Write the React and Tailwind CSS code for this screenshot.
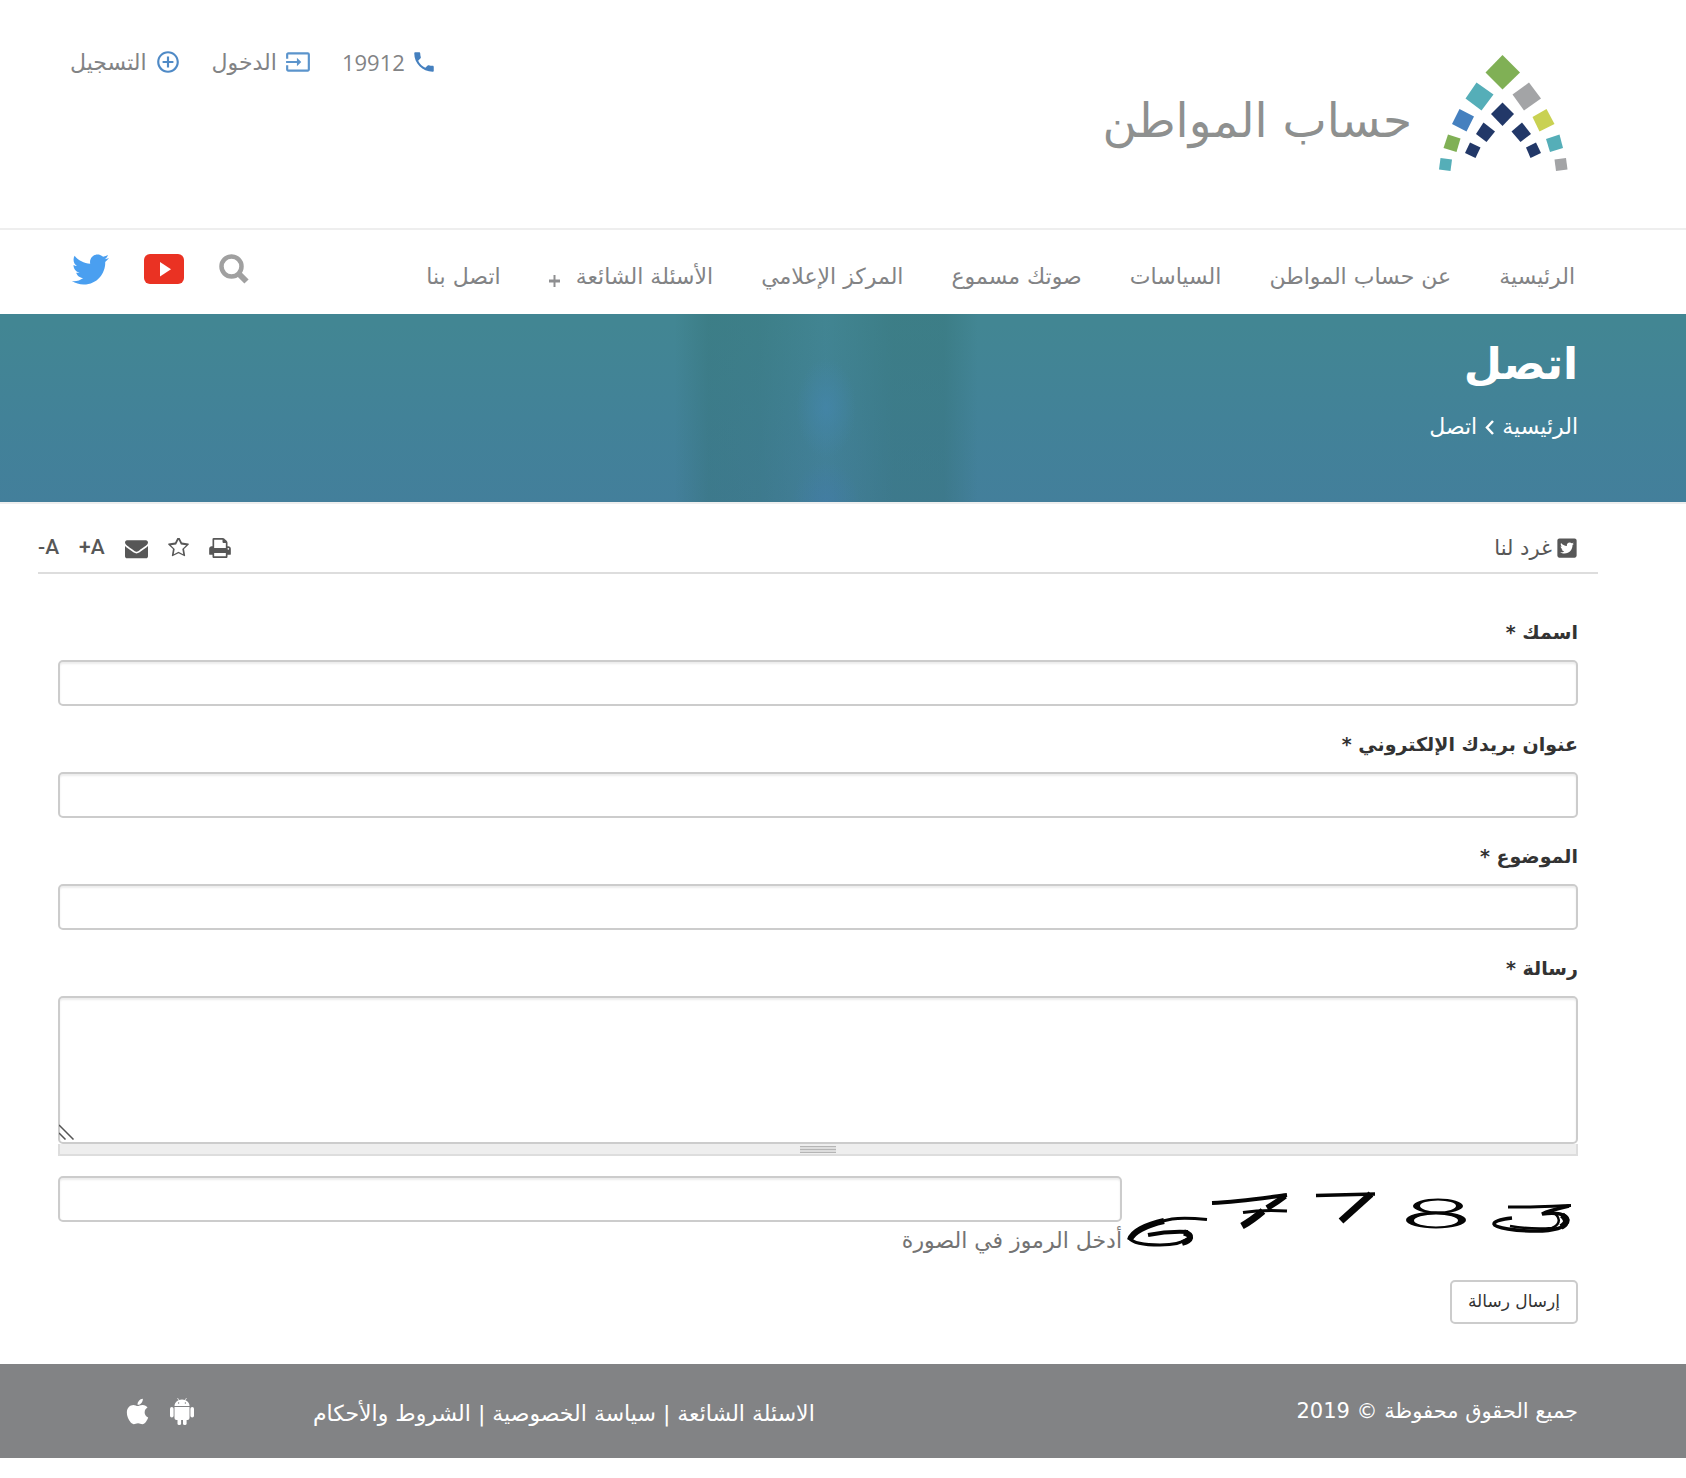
import React from "react";
import { FaApple, FaTwitter, FaTwitterSquare } from "react-icons/fa";
import { MdAddCircleOutline, MdInput, MdPhone } from "react-icons/md";

const squares = [
  ["#80b055", "63.5,0 81,17.5 63.5,34.5 46.5,17.5"],
  ["#55aeb8", "37.5,27.5 54.5,39.5 42.5,55.5 26.5,43.5"],
  ["#a3a4a6", "90,27.5 102,43.5 85,55.5 73.5,39.5"],
  ["#4580bf", "20.5,54 35,61.5 27.5,76.5 13,69"],
  ["#c9d152", "107.5,54 115.5,69 100.5,76.5 93.5,62"],
  ["#80b055", "9,79.5 21.5,83.5 17.5,97 4.5,93"],
  ["#55aeb8", "120.5,79.5 124,93 111,97 107,84"],
  ["#55aeb8", "1.5,103 13,104.5 11.5,116 0,114.5"],
  ["#a3a4a6", "127,103 128.5,114.5 117,116 115.5,104.5"],
  ["#223868", "63.5,47.5 75,59 63.5,71 52,59"],
  ["#223868", "44.5,67.5 56,76.5 47.5,87 37,79"],
  ["#223868", "83,67.5 92,79 81.5,87 72.5,76.5"],
  ["#223868", "31,87.5 41.5,92.5 36.5,103 26,98"],
  ["#223868", "97,87.5 102,98 91.5,103 87,92.5"],
];

function LogoMark() {
  return (
    <svg viewBox="0 0 129 116" className="h-[116px] w-[129px] shrink-0" aria-hidden="true">
      {squares.map(([fill, points]) => (
        <polygon key={points} fill={fill} points={points} />
      ))}
    </svg>
  );
}

function SearchIcon() {
  return (
    <svg viewBox="0 0 30 30" className="size-[30px]" fill="none" stroke="#a0a0a0" aria-hidden="true">
      <circle cx="12.5" cy="12.5" r="10" strokeWidth="4.500" />
      <path d="M19.5 19.5l8 8" strokeWidth="6" />
    </svg>
  );
}

function YoutubeIcon() {
  return (
    <svg viewBox="0 0 40 30" className="h-[30px] w-10" aria-hidden="true">
      <rect width="40" height="30" rx="6" fill="#ea3223" />
      <path d="M16 8v14.500l11-7.250z" fill="#fff" />
    </svg>
  );
}

function PrintIcon() {
  return (
    <svg viewBox="0 0 1664 1536" className="h-5 w-[22px]" fill="currentColor" aria-hidden="true">
      <path d="M384 1408h896v-256h-896v256zM384 768h896v-384h-160q-40 0-68-28t-28-68v-160h-640v640zM1536 832q0-26-19-45t-45-19-45 19-19 45 19 45 45 19 45-19 19-45zM1664 832v416q0 13-9.5 22.5t-22.5 9.5h-224v160q0 40-28 68t-68 28h-960q-40 0-68-28t-28-68v-160h-224q-13 0-22.5-9.5t-9.5-22.5v-416q0-79 56.5-135.5t135.5-56.5h64v-544q0-40 28-68t68-28h672q40 0 88 20t76 48l152 152q28 28 48 76t20 88v256h64q79 0 135.5 56.5t56.5 135.5z" />
    </svg>
  );
}

function StarIcon() {
  return (
    <svg viewBox="0 128 1664 1600" className="h-5 w-[21px]" fill="currentColor" aria-hidden="true">
      <path d="M1137 1004l306-297-422-62-189-382-189 382-422 62 306 297-73 421 378-199 377 199zM1664 615q0 22-26 48l-363 354 86 500q1 7 1 20 0 50-41 50-19 0-40-12l-449-236-449 236q-22 12-40 12-21 0-31.500-14.500t-10.500-35.500q0-6 2-20l86-500-364-354q-25-27-25-48 0-37 56-46l502-73 225-455q19-41 49-41t49 41l225 455 502 73q56 9 56 46z" />
    </svg>
  );
}

function EnvelopeIcon() {
  return (
    <svg viewBox="0 0 1792 1792" className="size-[23px]" fill="currentColor" aria-hidden="true">
      <path d="M1792 710v794q0 66-47 113t-113 47h-1472q-66 0-113-47t-47-113v-794q44 49 101 87 362 246 497 345 57 42 92.500 65.500t94.500 48 110 24.500h2q51 0 110-24.500t94.500-48 92.500-65.500q170-123 498-345 57-39 100-87zM1792 416q0 79-49 151t-122 123q-376 261-468 325-10 7-42.500 31t-54 38.500-52 32.500-57.500 27-50 9h-2q-23 0-50-9t-57.500-27-52-32.500-54-38.500-42.500-31q-91-64-262-182.500t-205-142.500q-62-42-117-115.500t-55-136.500q0-78 41.500-130t118.500-52h1472q65 0 112.500 47t47.500 113z" />
    </svg>
  );
}

function AndroidIcon() {
  return (
    <svg viewBox="0 0 24 27" className="h-[27px] w-6" fill="#fff" aria-hidden="true">
      <path d="M4.500 8C4.500 4.500 7.500 1.500 12 1.500S19.500 4.500 19.500 8z" />
      <path d="M7.500 0l1.500 2.500M16.500 0L15 2.500" stroke="#fff" strokeWidth="0.700" />
      <path d="M4.500 9h15v11a2 2 0 0 1-2 2h-11a2 2 0 0 1-2-2z" />
      <rect x="0" y="9" width="3.600" height="10.500" rx="1.800" />
      <rect x="20.400" y="9" width="3.600" height="10.500" rx="1.800" />
      <rect x="7.500" y="18" width="3.600" height="9" rx="1.600" />
      <rect x="13" y="18" width="3.600" height="9" rx="1.600" />
      <circle cx="8.600" cy="5" r="0.700" fill="#828385" />
      <circle cx="15.400" cy="5" r="0.700" fill="#828385" />
    </svg>
  );
}

function CaptchaImage() {
  return (
    <svg
      viewBox="0 0 456 72"
      className="mt-1 h-[72px] w-[456px] shrink-0"
      fill="none"
      stroke="#050505"
      strokeWidth="2.500"
      role="img"
      aria-label="CAPTCHA"
    >
      <path d="M85 39.500C70 38 60 37.500 50 39C34 42 24 46 18 50" strokeWidth="3" />
      <path d="M42 41C24 45 10 52 8 60" strokeWidth="6" />
      <path d="M7 58C10 62 20 65 38 65C52 65 62 62 67 58" strokeWidth="3" />
      <path d="M60 63C70 60 71 55 62 52.500" strokeWidth="6" />
      <path d="M66 52C48 51 36 53 26 55" strokeWidth="4" />
      <path d="M90 23C118 22 142 18 165 15" strokeWidth="4" />
      <path d="M163 16C158 20 152 24 145 28" strokeWidth="6" />
      <path d="M121 32.500C134 30.500 148 30 165 31" strokeWidth="3" />
      <path d="M141 31C134 37 129 41 120 46" strokeWidth="7" />
      <path d="M194 15.500L253 14" strokeWidth="3.500" />
      <path d="M249 14C240 22 230 31 219 41" strokeWidth="7" />
      <g fill="#050505" stroke="none" fillRule="evenodd">
        <path d="M291 26a25 7.500 0 1 0 50 0a25 7.500 0 1 0-50 0zM298 26a18 5.500 0 1 0 36 0a18 5.500 0 1 0-36 0z" />
        <path d="M284 40a30 8.500 0 1 0 60 0a30 8.500 0 1 0-60 0zM292 40.500a22 6 0 1 0 44 0a22 6 0 1 0-44 0z" />
      </g>
      <path d="M386 27C408 27.500 430 26 449 25.500" strokeWidth="3" />
      <path d="M447 26C434 29 426 31 420 34C434 32 445 34 446 40C446 48 430 51 414 51C394 51 373 48 372 44C372 41 380 39 390 38" strokeWidth="3.500" />
      <path d="M430 32C438 36 440 44 430 48C418 49 400 48 388 46" strokeWidth="2.500" />
      <path d="M440 35C445 39 446 43 439 47" strokeWidth="6" />
    </svg>
  );
}

const navItems = [
  "الرئيسية",
  "عن حساب المواطن",
  "السياسات",
  "صوتك مسموع",
  "المركز الإعلامي",
  "الأسئلة الشائعة",
  "اتصل بنا",
];

const fieldBox =
  "block w-full rounded-[5px] border-2 border-[#ccc] bg-white px-3 text-[20px] text-[#555] shadow-[inset_0_2px_2px_rgba(0,0,0,0.075)] outline-none";

const labelText = "mb-4 block text-[19px] leading-6 font-bold text-[#333]";

function Field({ id, label, type }) {
  return (
    <div className="mb-[26px]">
      <label htmlFor={id} className={labelText}>
        {label} *
      </label>
      <input id={id} type={type} required className={`${fieldBox} h-[46px]`} />
    </div>
  );
}

export default function App() {
  return (
    <div dir="rtl" className="min-h-screen bg-white font-['DejaVu_Sans',sans-serif] text-[22px] text-[#828385]">
      <header>
        <div className="flex h-[228px] items-start justify-between pr-[118px] pl-[70px]">
          <a href="#home" className="mt-[55px] flex items-center gap-[27px] text-[#8e908f]">
            <LogoMark />
            <span className="pt-4 text-[47px] leading-[60px] whitespace-nowrap">حساب المواطن</span>
          </a>
          <div className="mt-[47px] flex h-[30px] items-center gap-[31px] whitespace-nowrap">
            <a href="tel:19912" className="flex items-center gap-1.5 font-['Open_Sans','DejaVu_Sans',sans-serif]">
              <MdPhone className="size-[26px] text-[#4580bf]" aria-hidden="true" />
              19912
            </a>
            <a href="#login" className="flex items-center gap-2">
              <MdInput className="size-[26px] text-[#5b94cc]" aria-hidden="true" />
              الدخول
            </a>
            <a href="#register" className="flex items-center gap-2">
              <MdAddCircleOutline className="size-[26px] text-[#4f8ac6]" aria-hidden="true" />
              التسجيل
            </a>
          </div>
        </div>

        <div className="flex h-[86px] items-center justify-between border-t-2 border-[#eee] pr-[111px] pl-[72px]">
          <nav className="mt-2 flex items-center gap-12 whitespace-nowrap">
            {navItems.map((item) => (
              <a key={item} href="#nav" className="flex items-center gap-4">
                {item}
                {item === "الأسئلة الشائعة" && (
                  <svg viewBox="0 0 11 12" className="mt-2.5 h-3 w-[11px]" stroke="#8e8f91" fill="none" aria-hidden="true">
                    <path d="M0 6h11" strokeWidth="3" />
                    <path d="M5.500 0v12" strokeWidth="2" />
                  </svg>
                )}
              </a>
            ))}
          </nav>
          <div className="mb-1.5 flex items-center gap-[35px]">
            <button type="button" aria-label="بحث">
              <SearchIcon />
            </button>
            <a href="#youtube" aria-label="YouTube">
              <YoutubeIcon />
            </a>
            <a href="#twitter" aria-label="Twitter">
              <FaTwitter className="size-[37px] text-[#4a9ff0]" aria-hidden="true" />
            </a>
          </div>
        </div>
      </header>

      <section className="h-[190px] border-b-2 border-[#eee] bg-[radial-gradient(ellipse_30px_50px_at_49%_50%,rgba(68,134,172,0.7),transparent),radial-gradient(ellipse_34px_40px_at_49%_100%,rgba(66,124,168,0.6),transparent),linear-gradient(90deg,transparent_40%,rgba(50,110,112,0.35)_42%,rgba(50,110,112,0.3)_45%,rgba(60,120,135,0.1)_49%,rgba(50,110,112,0.35)_53%,rgba(50,110,112,0.35)_56%,transparent_58%),linear-gradient(180deg,#428693_5%,#428298_55%,#437f9b_100%)] pt-5 pr-[108px] text-white">
        <h1 className="text-[44px] leading-[60px] font-bold">اتصل</h1>
        <nav className="mt-[18px] flex items-center gap-2 leading-[30px]">
          <a href="#home">الرئيسية</a>
          <svg viewBox="0 0 9 15" className="h-[15px] w-[9px]" fill="none" stroke="#fff" strokeWidth="2.500" aria-hidden="true">
            <path d="M8 1L2 7.500l6 6.500" />
          </svg>
          <span>اتصل</span>
        </nav>
      </section>

      <main className="mr-[88px] ml-[38px]">
        <div className="flex h-[70px] items-end justify-between border-b-2 border-[#ddd] pr-5 pb-2 text-[21px] text-[#575757]">
          <a href="#tweet" className="flex items-center gap-1 leading-8">
            <FaTwitterSquare className="size-[22px]" aria-hidden="true" />
            غرد لنا
          </a>
          <div className="flex h-8 items-center gap-5 font-[Roboto] font-medium">
            <button type="button" aria-label="طباعة">
              <PrintIcon />
            </button>
            <button type="button" aria-label="المفضلة">
              <StarIcon />
            </button>
            <button type="button" aria-label="بريد">
              <EnvelopeIcon />
            </button>
            <button type="button" dir="ltr">
              +A
            </button>
            <button type="button" dir="ltr">
              -A
            </button>
          </div>
        </div>

        <form className="px-5 pt-[46px] pb-10" onSubmit={(e) => e.preventDefault()}>
          <Field id="name" label="اسمك" type="text" />
          <Field id="email" label="عنوان بريدك الإلكتروني" type="email" />
          <Field id="subject" label="الموضوع" type="text" />

          <label htmlFor="message" className={labelText}>
            رسالة *
          </label>
          <div className="relative">
            <textarea id="message" required className={`${fieldBox} h-[148px] resize-none`} />
            <svg viewBox="0 0 16 16" className="absolute bottom-1 left-px size-4" stroke="#555" strokeWidth="1.500" fill="none" aria-hidden="true">
              <path d="M0 1l14.500 14.500M0 9l6.500 6.500" />
            </svg>
          </div>
          <div className="flex h-3 justify-center border-x-2 border-b-2 border-[#ddd] bg-[#eee]">
            <div className="mt-0.5 flex h-[7px] w-9 flex-col justify-between bg-[#ddd]">
              <div className="h-px bg-[#b5b5b5]" />
              <div className="h-px bg-[#b5b5b5]" />
              <div className="h-px bg-[#b5b5b5]" />
            </div>
          </div>

          <div className="mt-5 flex h-[84px] items-start">
            <CaptchaImage />
            <div className="min-w-0 flex-1">
              <input id="captcha" type="text" required className={`${fieldBox} h-[46px]`} />
              <label htmlFor="captcha" className="block leading-[38px] text-[#737373]">
                أدخل الرموز في الصورة
              </label>
            </div>
          </div>

          <button
            type="submit"
            className="mt-5 h-11 rounded-[5px] border-2 border-[#ccc] bg-white px-4 text-[17px] whitespace-nowrap text-[#333]"
          >
            إرسال رسالة
          </button>
        </form>
      </main>

      <footer className="flex h-[94px] items-center bg-[#828385] pr-[108px] pl-[123px] whitespace-nowrap text-white">
        <p className="flex-1 pt-0.5 text-[21px]">جميع الحقوق محفوظة © 2019</p>
        <p className="ml-[119px] pt-1">
          <a href="#faq">الاسئلة الشائعة</a> | <a href="#privacy">سياسة الخصوصية</a> | <a href="#terms">الشروط والأحكام</a>
        </p>
        <div className="flex items-center gap-[18px]">
          <a href="#android" aria-label="Android">
            <AndroidIcon />
          </a>
          <a href="#apple" aria-label="Apple">
            <FaApple className="size-[29px]" aria-hidden="true" />
          </a>
        </div>
      </footer>
    </div>
  );
}
